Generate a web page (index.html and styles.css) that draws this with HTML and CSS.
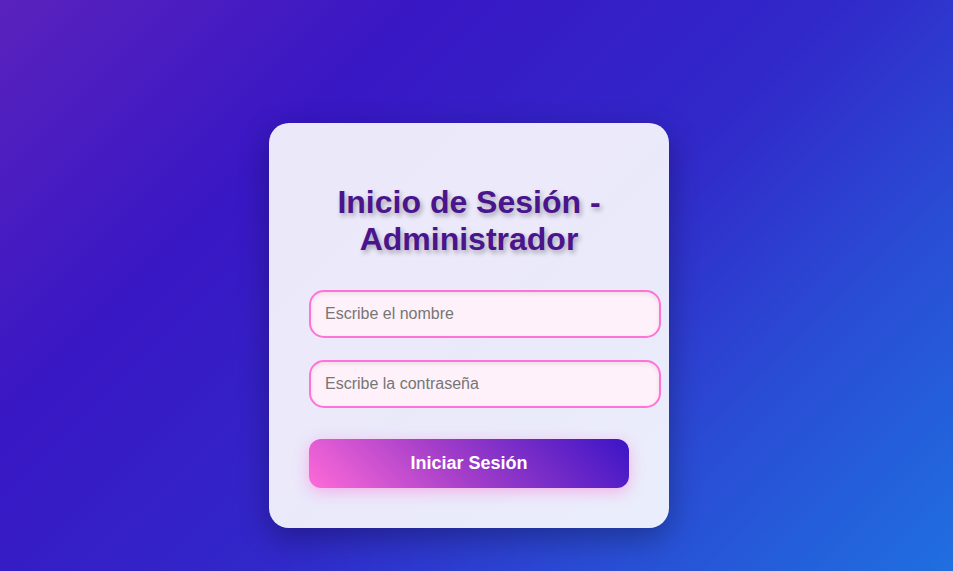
FILE: index.html
```html
<!DOCTYPE html>
<html lang="es">
<head>
<meta charset="utf-8">
<title>Inicio de Sesión - Administrador</title>
<link rel="stylesheet" href="styles.css">
</head>
<body>
<main class="page">
  <div class="card">
    <h2 class="title">Inicio de Sesión - Administrador</h2>
    <form class="form">
      <input class="field" type="text" placeholder="Escribe el nombre">
      <input class="field" type="password" placeholder="Escribe la contraseña">
      <button class="btn" type="button">Iniciar Sesión</button>
    </form>
  </div>
</main>
</body>
</html>
```
FILE: styles.css
```css
html, body {
  margin: 0;
  height: 100%;
}
body {
  font-family: "Liberation Sans", Arial, sans-serif;
  background: linear-gradient(135deg, #5a22bd 0%, #3817c4 28%, #3128c9 55%, #2a4bd4 75%, #1f6fe0 100%);
  overflow: hidden;
}
.page {
  display: flex;
  justify-content: center;
  align-items: flex-start;
  padding: 123px 15px 0 0;
}
.card {
  width: 320px;
  padding: 40px;
  background: rgba(255, 255, 255, 0.9);
  border-radius: 20px;
  box-shadow: 0 10px 30px rgba(0, 0, 0, 0.3);
  text-align: center;
}
.title {
  margin: 21px 0 32px;
  font-size: 32px;
  font-weight: bold;
  color: #4a148c;
  text-shadow: 2px 3px 5px rgba(0, 0, 0, 0.3);
}
.form {
  display: flex;
  flex-direction: column;
  align-items: flex-start;
  margin: 0;
}
.field {
  display: block;
  width: 100%;
  box-sizing: content-box;
  margin: 0 0 22px;
  padding: 13px 14px;
  border: 2px solid #ff72d8;
  border-radius: 15px;
  background: #fff1fa;
  box-shadow: inset 0 2px 5px rgba(0, 0, 0, 0.08);
  font-family: "Liberation Sans", Arial, sans-serif;
  font-size: 16px;
  color: #333;
  outline: none;
}
.field::placeholder {
  color: #767676;
}
.btn {
  width: 100%;
  margin-top: 9px;
  padding: 14px 0;
  border: none;
  border-radius: 12px;
  background: linear-gradient(45deg, #ff6ad8 0%, #a43ec9 45%, #3b14c6 100%);
  box-shadow: 0 4px 15px rgba(255, 106, 213, 0.45);
  color: #fff;
  font-family: "Liberation Sans", Arial, sans-serif;
  font-size: 18px;
  font-weight: bold;
  cursor: pointer;
}
```
